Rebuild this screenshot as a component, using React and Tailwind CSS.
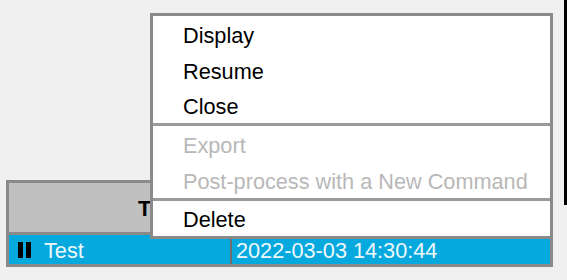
import React from "react";

export default function App() {
  const font = { fontFamily: '"Liberation Sans", Arial, sans-serif' };
  return (
    <div
      className="relative w-[567px] h-[280px] overflow-hidden bg-[#f0f0f0]"
      style={font}
    >
      {/* right edge dark line */}
      <div className="absolute right-0 top-0 w-[3px] h-[205px] bg-black" />

      {/* table */}
      <div className="pt-[180px] pl-[6px]">
        <div className="w-[547px] border-[3px] border-[#8a8a8a] flex flex-col">
          <div className="h-[49px] bg-[#c0c0c0] flex items-center pt-[2px]">
            <span className="ml-[129px] text-[22px] font-bold text-black leading-none">
              Task
            </span>
          </div>
          <div className="h-[3px] bg-[#8a8a8a]" />
          <div className="h-[29px] bg-[#05a9de] flex items-stretch text-[21.7px] text-[#eef8fc] leading-none">
            <div className="w-[223px] flex items-center border-r-[2px] border-[#6e6e6e]">
              <div className="ml-[9px] flex gap-[3px]">
                <div className="w-[5px] h-[16px] bg-black" />
                <div className="w-[5px] h-[16px] bg-black" />
              </div>
              <span className="ml-[13px] pt-[3px]">Test</span>
            </div>
            <div className="flex items-center pl-[4px] pt-[3px]">2022-03-03 14:30:44</div>
          </div>
        </div>
      </div>

      {/* context menu */}
      <div className="absolute left-[150px] top-[13px] w-[403px] h-[226px] bg-white border-[3px] border-[#8a8a8a] flex flex-col text-[21.7px] leading-none">
        <div className="h-[36px] flex items-center pl-[30px] pt-[3px] text-black">Display</div>
        <div className="h-[36px] flex items-center pl-[30px] pt-[3px] text-black">Resume</div>
        <div className="h-[35px] flex items-center pl-[30px] pt-[3px] text-black">Close</div>
        <div className="h-[3px] bg-[#9a9a9a]" />
        <div className="h-[36px] flex items-center pl-[30px] pt-[3px] text-[#b8b8b8]">Export</div>
        <div className="h-[36px] flex items-center pl-[30px] pt-[3px] text-[#b8b8b8]">
          Post-process with a New Command
        </div>
        <div className="h-[3px] bg-[#9a9a9a]" />
        <div className="h-[35px] flex items-center pl-[30px] pt-[3px] text-black">Delete</div>
      </div>
    </div>
  );
}
